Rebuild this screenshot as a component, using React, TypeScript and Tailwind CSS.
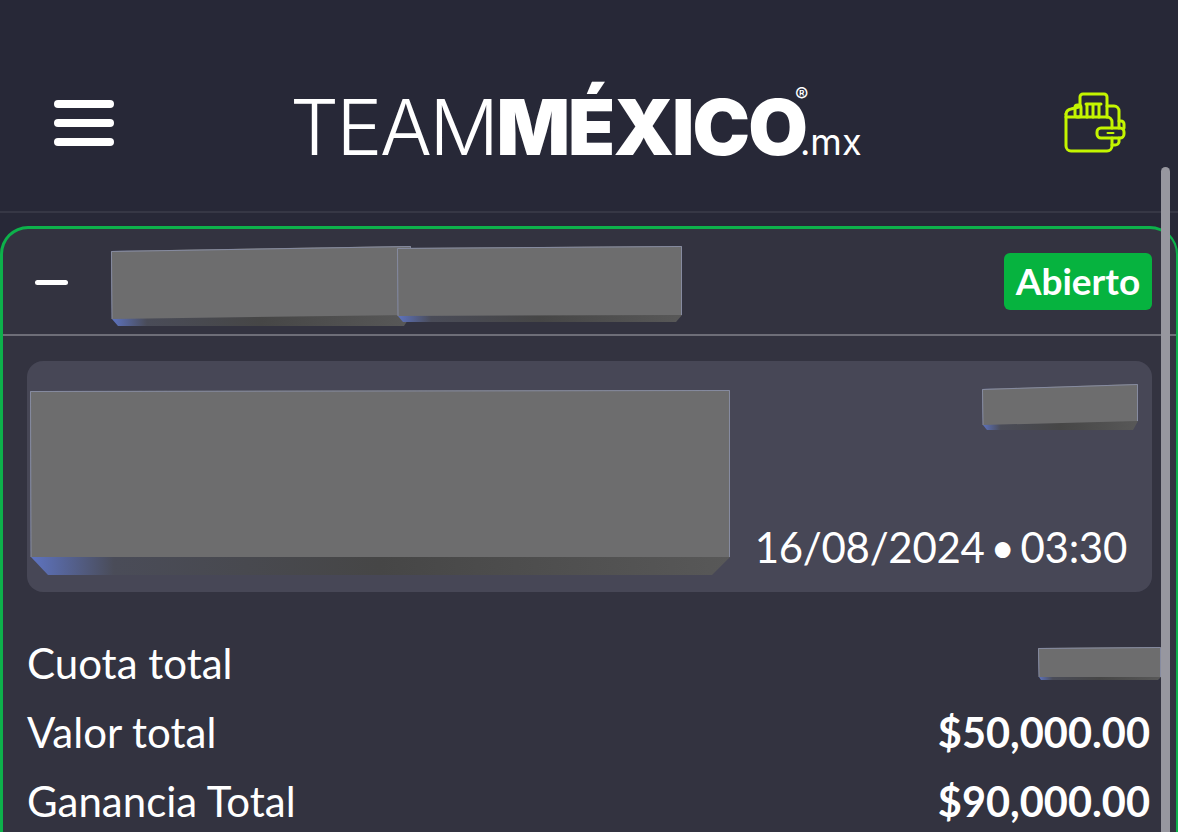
import React from "react";

interface RedactProps {
  id: string;
  w: number;
  h: number;
  bevel: number;
  tilt?: number;
  className?: string;
}

// gray blocks that hide private data in the screenshot
const Redact: React.FC<RedactProps> = ({ id, w, h, bevel, tilt = 0, className }) => {
  const bottom = h - bevel;
  const face = `0,${tilt + 1} ${w},0 ${w},${bottom - tilt} ${w - bevel},${h} ${bevel},${h} 1,${bottom}`;
  return (
    <svg width={w} height={h} viewBox={`0 0 ${w} ${h}`} className={`block shrink-0 ${className ?? ""}`}>
      <defs>
        <linearGradient id={id} x1="0" y1="0" x2="1" y2="0">
          <stop offset="0" stopColor="#5e74c2" />
          <stop offset="0.12" stopColor="#4a4c58" />
          <stop offset="0.5" stopColor="#464646" />
          <stop offset="1" stopColor="#585858" />
        </linearGradient>
      </defs>
      <polygon points={face} fill={`url(#${id})`} />
      <polygon points={`0,${tilt + 1} ${w},0 ${w},${bottom - tilt} 1,${bottom}`} fill="#6d6d6e" />
      <polyline points={`1,${bottom} 0.5,${tilt + 1.5} ${w - 0.5},0.5 ${w - 0.5},${bottom - tilt}`} fill="none" stroke="#868ba0" strokeWidth="1" />
    </svg>
  );
};

const WalletIcon = () => (
  <svg width="70" height="70" viewBox="1060 88 70 70" fill="none" stroke="#c4f500" strokeWidth="3" strokeLinecap="round" strokeLinejoin="round" className="block">
    <path d="M1067 114v32a5 5 0 0 0 5 5h36a5 5 0 0 0 5-5v-8" />
    <path d="M1113 128v-6a5 5 0 0 0-5-5h-41" />
    <path d="M1067 114a6 6 0 0 1 5-5l8-2" />
    <path d="M1081 105v-8a3 3 0 0 1 3-3h21a3 3 0 0 1 3 3v20" />
    <rect x="1076" y="105" width="6" height="12" rx="2.5" />
    <path d="M1087 104h15M1088 104v13M1094 104v13M1100 104v13" />
    <path d="M1108 106h7a5 5 0 0 1 5 5v17" />
    <path d="M1120 121h2a3 3 0 0 1 3 3v4M1120 138v4a4 4 0 0 1-4 3h-3" />
    <rect x="1098" y="128" width="27" height="10" rx="4" />
    <path d="M1108.5 133h6" strokeWidth="2" />
  </svg>
);

const rows = [
  { label: "Valor total", value: "$50,000.00" },
  { label: "Ganancia Total", value: "$90,000.00" },
];

const App = () => {
  return (
    <div className="relative h-[832px] w-full overflow-hidden bg-[#272837] font-['Lato',sans-serif] text-white">
      {/* top bar */}
      <header className="flex h-[213px] items-start border-b-2 border-[#363745] pl-[54px] pr-[48px] pt-[100px]">
        <div className="flex w-[60px] flex-col gap-[11px]">
          <span className="h-[8px] rounded-full bg-white" />
          <span className="h-[8px] rounded-full bg-white" />
          <span className="h-[8px] rounded-full bg-white" />
        </div>
        <div className="relative -mt-[18px] ml-[176px] flex items-baseline font-['Inter',sans-serif] text-[77px] leading-[90px] tracking-[-2.4px]">
          <span className="font-light">TEAM</span>
          <span className="font-black tracking-[-1.9px]">MÉXICO</span>
          <span className="-ml-[6px] text-[36px] font-normal tracking-normal">.mx</span>
          <span className="absolute left-[505px] top-[3px] text-[20px] leading-none tracking-normal">®</span>
        </div>
        <div className="-mt-[12px] ml-auto mr-[1px]">
          <WalletIcon />
        </div>
      </header>

      {/* bet card */}
      <section className="mt-[13px] h-[700px] rounded-t-[28px] border-2 border-l-[3px] border-t-[3px] border-[#0db14b] bg-[#333340]">
        <div className="flex h-[107px] items-center border-b-2 border-[#6e6e78] pl-[32px] pr-[24px]">
          <span className="mt-[1px] h-[5px] w-[33px] rounded-full bg-white" />
          <Redact id="a" w={300} h={80} bevel={7} tilt={4} className="ml-[43px] mt-[9px]" />
          <Redact id="b" w={285} h={76} bevel={6} tilt={1} className="-ml-[14px] mt-[5px]" />
          <span className="ml-auto -mt-[1px] flex h-[57px] w-[148px] items-center justify-center rounded-[6px] bg-[#06b33f] text-[37px] font-bold">
            Abierto
          </span>
        </div>

        <div className="mx-[24px] mt-[25px] flex h-[231px] justify-between rounded-[16px] bg-[#474756] pl-[3px] pr-[14px]">
          <Redact id="c" w={700} h={185} bevel={18} className="mt-[29px]" />
          <div className="flex flex-col items-end">
            <Redact id="d" w={156} h={46} bevel={5} tilt={4} className="mt-[23px]" />
            <span className="mb-[20px] mr-[11px] mt-auto text-[42px] leading-[50px] tracking-[-0.3px] [word-spacing:-4.5px]">16/08/2024 • 03:30</span>
          </div>
        </div>

        <div className="ml-[24px] mt-[37px] text-[42px] leading-[69px]">
          <div className="flex items-center justify-between">
            <span>Cuota total</span>
            <Redact id="e" w={123} h={33} bevel={3} className="mr-[15px]" />
          </div>
          {rows.map((row) => (
            <div key={row.label} className="flex items-center justify-between pr-[26px]">
              <span>{row.label}</span>
              <span className="text-[41.5px] font-bold">{row.value}</span>
            </div>
          ))}
        </div>
      </section>

      {/* scrollbar */}
      <div className="absolute bottom-0 right-[8px] top-[167px] w-[9px] rounded-t-full bg-[#97979f]" />
    </div>
  );
};

export default App;
